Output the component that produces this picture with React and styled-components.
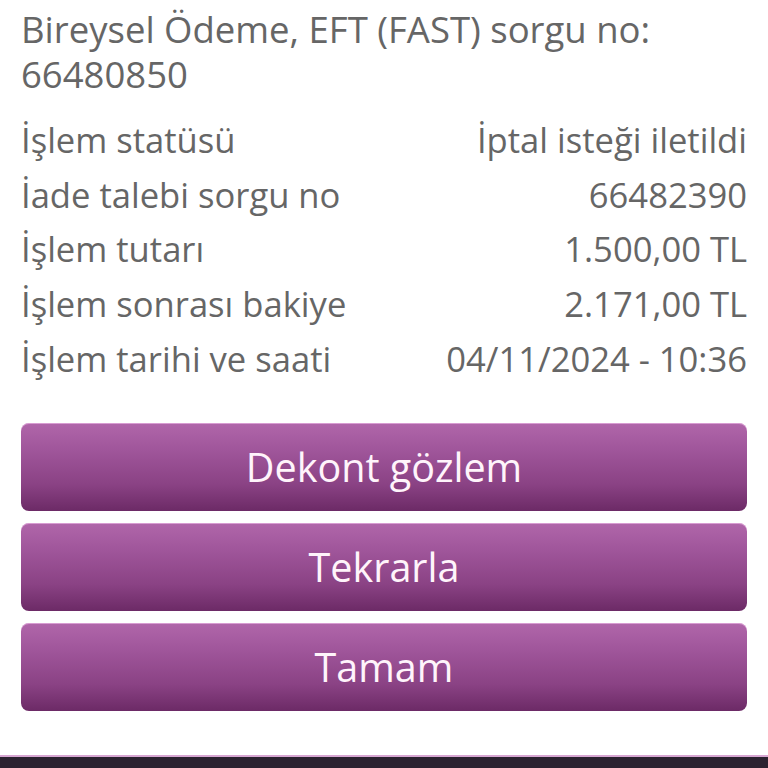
import React from "react";
import styled, { createGlobalStyle } from "styled-components";

const Global = createGlobalStyle`
  html, body { margin: 0; padding: 0; background: #ffffff; }
  body { font-family: "Open Sans", "Noto Sans", sans-serif; overflow: hidden; }
`;

const Screen = styled.div`
  width: 768px;
  height: 768px;
  display: flex;
  flex-direction: column;
  overflow: hidden;
  background: #fff;
`;

const Content = styled.div`
  flex: 1;
  padding: 7px 21px 0 21px;
  display: flex;
  flex-direction: column;
`;

const Heading = styled.div`
  color: #666666;
  font-size: 36.5px;
  line-height: 45px;
`;

const Details = styled.div`
  margin-top: 15px;
  display: flex;
  flex-direction: column;
`;

const Row = styled.div`
  display: flex;
  justify-content: space-between;
  align-items: center;
  height: 54.8px;
  color: #666666;
  font-size: 34.6px;
`;

const Buttons = styled.div`
  margin-top: 37px;
  display: flex;
  flex-direction: column;
  gap: 12px;
`;

const Button = styled.button`
  height: 88px;
  width: 100%;
  border: none;
  border-radius: 8px;
  background: linear-gradient(180deg, #b066aa 0%, #a0569b 30%, #8a4284 70%, #6c2a66 100%);
  box-shadow: inset 0 1px 0 rgba(255, 210, 250, 0.5);
  color: #fff4fb;
  font-family: "Open Sans", "Noto Sans", sans-serif;
  font-size: 39.5px;
  padding: 0;
  cursor: pointer;
`;

const Footer = styled.div`
  height: 11px;
  border-top: 2px solid #d7a6d2;
  background: #2b2230;
`;

const rows = [
  ["İşlem statüsü", "İptal isteği iletildi"],
  ["İade talebi sorgu no", "66482390"],
  ["İşlem tutarı", "1.500,00 TL"],
  ["İşlem sonrası bakiye", "2.171,00 TL"],
  ["İşlem tarihi ve saati", "04/11/2024 - 10:36"],
];

export default function App() {
  return (
    <Screen>
      <Global />
      <Content>
        <Heading>
          Bireysel Ödeme, EFT (FAST) sorgu no:
          <br />
          66480850
        </Heading>
        <Details>
          {rows.map(([k, v]) => (
            <Row key={k}>
              <span>{k}</span>
              <span>{v}</span>
            </Row>
          ))}
        </Details>
        <Buttons>
          <Button>Dekont gözlem</Button>
          <Button>Tekrarla</Button>
          <Button>Tamam</Button>
        </Buttons>
      </Content>
      <Footer />
    </Screen>
  );
}
